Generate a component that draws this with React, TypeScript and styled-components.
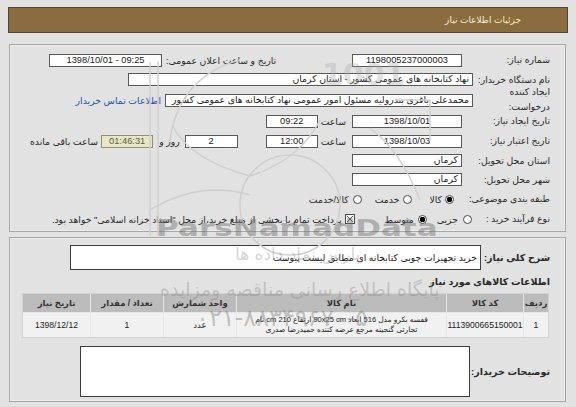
import React from 'react';
import styled, { createGlobalStyle } from 'styled-components';

const Global = createGlobalStyle`
  html, body { margin: 0; padding: 0; background: #e2e2e2; }
  body { font-family: "Liberation Sans", "DejaVu Sans", sans-serif; font-size: 9.3px; color: #222; }
  * { box-sizing: border-box; }
`;

const Page = styled.div`
  position: relative;
  width: 576px;
  height: 407px;
  overflow: hidden;
  padding-top: 7px;
  direction: rtl;
  background: #e2e2e2;
`;

const Header = styled.div`
  margin: 0 8px;
  height: 26px;
  background: #8b6c3e;
  border: 1px solid #544634;
  display: flex;
  align-items: center;
  padding-right: 46px;
  color: #f4ecdc;
  font-size: 9px;
`;

const Panel = styled.div<{ $mt: number; $pt: number; $pb: number }>`
  margin: ${p => p.$mt}px 10px 0 9px;
  border: 1px solid #a6a6a6;
  box-shadow: inset 0 0 0 1px #ececec;
  padding: ${p => p.$pt}px 0 ${p => p.$pb}px 0;
  display: flex;
  flex-direction: column;
`;

const Row = styled.div<{ $h: number; $pt?: number }>`
  display: flex;
  align-items: center;
  height: ${p => p.$h}px;
  padding-top: ${p => p.$pt ?? 0}px;
  white-space: nowrap;
`;

const Label = styled.div<{ $w?: number; $bold?: boolean; $lh?: number; $wrap?: boolean }>`
  flex: none;
  width: ${p => p.$w ?? 92}px;
  padding-right: 15px;
  text-align: right;
  font-weight: ${p => (p.$bold ? 'bold' : 'normal')};
  font-size: ${p => (p.$bold ? '9.5px' : '9.3px')};
  line-height: ${p => p.$lh ?? 12}px;
  white-space: ${p => (p.$wrap ? 'normal' : 'nowrap')};
  color: #2a2a2a;
`;

const Field = styled.div<{ $w: number; $align?: string; $mr?: number; $yellow?: boolean; $ltr?: boolean }>`
  flex: none;
  width: ${p => p.$w}px;
  height: 13px;
  margin-right: ${p => p.$mr ?? 0}px;
  border: 1px solid ${p => (p.$yellow ? '#8f8f7a' : '#585858')};
  background: ${p => (p.$yellow ? '#e7e7c4' : '#ffffff')};
  color: ${p => (p.$yellow ? '#5b5b4a' : '#222')};
  line-height: 11px;
  padding: 0 3px;
  text-align: ${p => p.$align ?? 'center'};
  direction: ${p => (p.$ltr ? 'ltr' : 'rtl')};
  white-space: nowrap;
  overflow: hidden;
`;

const Text = styled.span<{ $mr?: number }>`
  flex: none;
  margin-right: ${p => p.$mr ?? 0}px;
  color: #2a2a2a;
`;

const Link = styled.a`
  flex: none;
  margin-right: 4px;
  color: #2b4fa6;
  text-decoration: none;
`;

const PushLeft = styled.div<{ $ml: number }>`
  margin-right: auto;
  margin-left: ${p => p.$ml}px;
  display: flex;
  align-items: center;
  gap: 4px;
`;

const Radio = styled.span<{ $on?: boolean; $mr?: number }>`
  flex: none;
  width: 9px;
  height: 9px;
  border-radius: 50%;
  margin-right: ${p => p.$mr ?? 0}px;
  border: 1px solid #4a4a4a;
  background: ${p =>
    p.$on ? 'radial-gradient(circle, #000 0 2.6px, #fff 3px)' : '#fbfbfb'};
`;

const Option = styled.span<{ $mr?: number }>`
  flex: none;
  margin-right: ${p => p.$mr ?? 3}px;
  color: #2a2a2a;
`;

const Check = styled.svg`
  flex: none;
  width: 10px;
  height: 10px;
  margin-right: 30px;
`;

const BigBox = styled.div<{ $w: number; $h: number; $mr?: number }>`
  flex: none;
  width: ${p => p.$w}px;
  height: ${p => p.$h}px;
  margin-right: ${p => p.$mr ?? 0}px;
  border: 1px solid #3c3c3c;
  background: #fff;
  padding: 0 3px;
  display: flex;
  align-items: center;
  color: #222;
  white-space: nowrap;
  overflow: hidden;
`;

const Section = styled.div`
  height: 23px;
  display: flex;
  align-items: center;
  padding-right: 15px;
  font-weight: bold;
  font-size: 9.5px;
  color: #2a2a2a;
`;

const Table = styled.div`
  margin: 0 16px 0 12px;
  display: grid;
  grid-template-columns: 24px 76px 209px 72px 72px 1fr;
  grid-template-rows: 18px 24px;
  gap: 1px;
  background: #e6e6e6;
  border: 1px solid #d2d2d2;
`;

const Th = styled.div`
  background: #bcbcbc;
  display: flex;
  align-items: center;
  justify-content: center;
  font-weight: bold;
  font-size: 8.5px;
  color: #333;
`;

const Td = styled.div<{ $small?: boolean }>`
  background: #f1f1f1;
  display: flex;
  flex-direction: column;
  align-items: center;
  justify-content: center;
  text-align: center;
  font-size: ${p => (p.$small ? '7.5px' : '8.6px')};
  line-height: 10px;
  color: #222;
  white-space: nowrap;
  overflow: hidden;
`;

const Overlay = styled.div`
  position: absolute;
  inset: 0;
  pointer-events: none;
  direction: ltr;
  font-family: "DejaVu Sans", sans-serif;
`;

const Mark = styled.div<{ $x: number; $y: number; $size: number; $color: string; $bold?: boolean; $sx?: number }>`
  position: absolute;
  left: ${p => p.$x}px;
  top: ${p => p.$y}px;
  font-size: ${p => p.$size}px;
  color: ${p => p.$color};
  font-weight: ${p => (p.$bold ? 'bold' : 'normal')};
  transform: scaleX(${p => p.$sx ?? 1});
  transform-origin: left top;
  white-space: nowrap;
  line-height: 1;
`;

const Logo = styled.svg`
  position: absolute;
  left: 0;
  top: 0;
`;

export default function App() {
  return (
    <>
      <Global />
      <Page>
        <Header>جزئیات اطلاعات نیاز</Header>

        <Panel $mt={11} $pt={5} $pb={2}>
          <Row $h={20}>
            <Label>شماره نیاز:</Label>
            <Field $w={110} $mr={11}>1198005237000003</Field>
            <PushLeft $ml={39}>
              <Text>تاریخ و ساعت اعلان عمومی:</Text>
              <Field $w={113} $ltr>1398/10/01 - 09:25</Field>
            </PushLeft>
          </Row>
          <Row $h={19}>
            <Label>نام دستگاه خریدار:</Label>
            <Field $w={345} $align="right">نهاد کتابخانه های عمومی کشور - استان کرمان</Field>
          </Row>
          <Row $h={22}>
            <Label $lh={15} $wrap>ایجاد کننده درخواست:</Label>
            <Field $w={308} $align="right">محمدعلی باقری بندرولیه مسئول امور عمومی نهاد کتابخانه های عمومی کشور</Field>
            <Link href="#">اطلاعات تماس خریدار</Link>
          </Row>
          <Row $h={20}>
            <Label>تاریخ ایجاد نیاز:</Label>
            <Field $w={110} $mr={11}>1398/10/01</Field>
            <Text $mr={6}>ساعت</Text>
            <Field $w={52} $mr={3}>09:22</Field>
          </Row>
          <Row $h={20}>
            <Label>تاریخ اعتبار نیاز:</Label>
            <Field $w={110} $mr={11}>1398/10/03</Field>
            <Text $mr={6}>ساعت</Text>
            <Field $w={52} $mr={3}>12:00</Field>
            <Field $w={53} $mr={28}>2</Field>
            <Text $mr={5}>روز و</Text>
            <Field $w={52} $mr={6} $yellow>01:46:31</Field>
            <Text $mr={3}>ساعت باقی مانده</Text>
          </Row>
          <Row $h={19}>
            <Label>استان محل تحویل:</Label>
            <Field $w={110} $mr={11} $align="right">کرمان</Field>
          </Row>
          <Row $h={19}>
            <Label>شهر محل تحویل:</Label>
            <Field $w={110} $mr={11} $align="right">کرمان</Field>
          </Row>
          <Row $h={20}>
            <Label>طبقه بندی موضوعی:</Label>
            <Radio $on $mr={19} />
            <Option>کالا</Option>
            <Radio $mr={17} />
            <Option $mr={4}>خدمت</Option>
            <Radio $mr={13} />
            <Option $mr={4}>کالا/خدمت</Option>
          </Row>
          <Row $h={20}>
            <Label>نوع فرآیند خرید :</Label>
            <Radio $mr={1} />
            <Option $mr={5}>جزیی</Option>
            <Radio $on $mr={10} />
            <Option $mr={4}>متوسط</Option>
            <Check viewBox="0 0 10 10">
              <rect x="0.5" y="0.5" width="9" height="9" fill="#f8f8f8" stroke="#4a4a4a" />
              <path d="M2 2 L8 8 M8 2 L2 8" stroke="#4a4a4a" strokeWidth="1" />
            </Check>
            <Option $mr={3}>پرداخت تمام یا بخشی از مبلغ خرید،از محل "اسناد خزانه اسلامی" خواهد بود.</Option>
          </Row>
        </Panel>

        <Panel $mt={5} $pt={7} $pb={4}>
          <Row $h={25}>
            <Label $w={84} $bold>شرح کلی نیاز:</Label>
            <BigBox $w={411} $h={25}>خرید تجهیزات چوبی کتابخانه ای مطابق لیست پیوست</BigBox>
          </Row>
          <Section>اطلاعات کالاهای مورد نیاز</Section>
          <Table>
            <Th>ردیف</Th>
            <Th>کد کالا</Th>
            <Th>نام کالا</Th>
            <Th>واحد شمارش</Th>
            <Th>تعداد / مقدار</Th>
            <Th>تاریخ نیاز</Th>
            <Td>1</Td>
            <Td>1113900665150001</Td>
            <Td $small>
              <span>قفسه بکرو مدل 516 ابعاد 90x25 cm ارتفاع 210 cm نام</span>
              <span>تجارتی گنجینه مرجع عرضه کننده حمیدرضا صدری</span>
            </Td>
            <Td>عدد</Td>
            <Td>1</Td>
            <Td>1398/12/12</Td>
          </Table>
          <Row $h={59} $pt={8}>
            <Label $w={95} $bold>توضیحات خریدار:</Label>
            <BigBox $w={390} $h={51} />
          </Row>
        </Panel>

        <Overlay>
          <Logo width="576" height="407" viewBox="0 0 576 407">
            <g fill="none" stroke="#cfcfcf" strokeWidth="1.5">
              <line x1="150" y1="62" x2="150" y2="236" />
              <line x1="158" y1="62" x2="158" y2="236" />
              <path d="M170 140 C175 100 200 70 240 60" />
              <path d="M172 125 Q190 160 250 176 Q300 160 320 120" />
              <circle cx="290" cy="205" r="50" />
              <path d="M150 210 Q200 180 250 195" />
              <path d="M370 128 Q400 150 420 200" />
              <path d="M395 100 L430 100 L430 140" />
            </g>
          </Logo>
          <Mark $x={322} $y={60} $size={30} $color="rgba(170,170,170,0.35)" $bold>1001</Mark>
          <Mark $x={156} $y={217} $size={23} $color="rgba(110,110,110,0.45)" $bold $sx={1.35}>ParsNamadData</Mark>
          <Mark $x={235} $y={246} $size={17} $color="rgba(150,150,150,0.4)">پارس نماد داده ها</Mark>
          <Mark $x={160} $y={280} $size={19} $color="rgba(140,140,140,0.4)">پایگاه اطلاع رسانی مناقصه ومزایده</Mark>
          <Mark $x={196} $y={306} $size={24} $color="rgba(120,120,120,0.42)">۰۲۱-۸۸۳۴۹۶۷۰-۵</Mark>
        </Overlay>
      </Page>
    </>
  );
}
